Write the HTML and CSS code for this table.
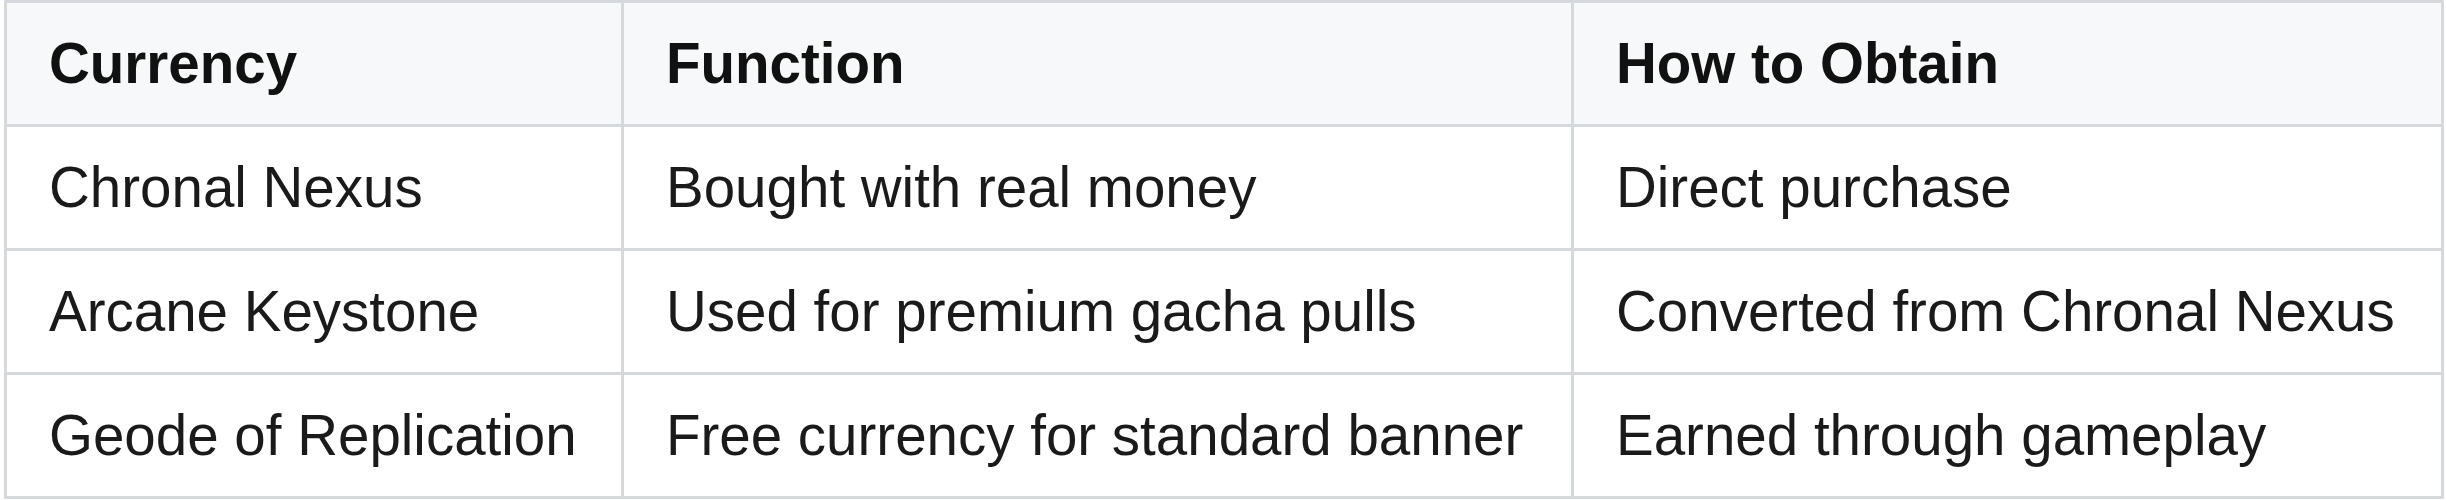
FILE: index.html
```html
<!DOCTYPE html>
<html>
<head>
<meta charset="utf-8">
<link rel="stylesheet" href="styles.css">
</head>
<body>
<table class="currency-table">
  <colgroup>
    <col class="col-currency">
    <col class="col-function">
    <col class="col-obtain">
  </colgroup>
  <thead>
    <tr>
      <th>Currency</th>
      <th>Function</th>
      <th>How to Obtain</th>
    </tr>
  </thead>
  <tbody>
    <tr>
      <td>Chronal Nexus</td>
      <td>Bought with real money</td>
      <td>Direct purchase</td>
    </tr>
    <tr>
      <td>Arcane Keystone</td>
      <td>Used for premium gacha pulls</td>
      <td>Converted from Chronal Nexus</td>
    </tr>
    <tr>
      <td>Geode of Replication</td>
      <td>Free currency for standard banner</td>
      <td>Earned through gameplay</td>
    </tr>
  </tbody>
</table>
</body>
</html>
```

FILE: styles.css
```css
html, body {
  margin: 0;
  padding: 0;
  background: #ffffff;
}

body {
  padding: 0 4px;
  font-family: "Liberation Sans", Arial, sans-serif;
  color: #1a1a1a;
}

.currency-table {
  border-collapse: collapse;
  table-layout: fixed;
  width: 2437px;
  font-size: 56.5px;
  line-height: 84px;
}

.col-currency { width: 617px; }
.col-function { width: 950px; }
.col-obtain { width: 870px; }

.currency-table th,
.currency-table td {
  border: 3px solid #d5d8dc;
  padding: 18.5px 42px 18.5px;
  text-align: left;
  white-space: nowrap;
}

.currency-table th {
  font-weight: bold;
  background: #f6f8fa;
  color: #111111;
}

.currency-table td {
  font-weight: normal;
}
```
